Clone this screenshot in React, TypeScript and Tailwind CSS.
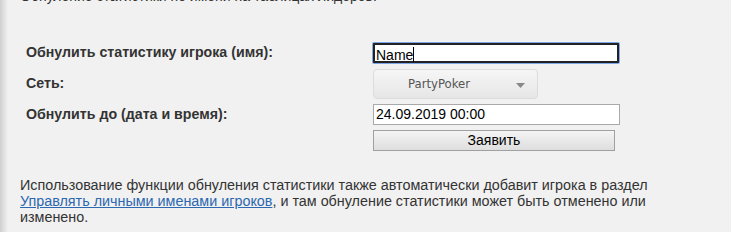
import React from "react";

export default function App() {
  return (
    <div className="flex h-[232px] w-[731px] overflow-hidden bg-[#f1f1f1] font-['Liberation_Sans',Arial,sans-serif] text-[#333]">
      <div className="w-[8px] shrink-0 bg-gradient-to-r from-[#cfcfcf] to-[#f1f1f1]" />
      <div className="flex flex-1 flex-col pl-[12px]">
        <div className="mt-[-12px] h-[16px] text-[14px] leading-[16px] text-[#333]">
          Обнуление статистики по имени на таблицах лидеров.
        </div>
        <div className="mt-[39px] flex flex-col pl-[6px]">
          <div className="flex h-[20px] items-center">
            <div className="w-[347px] text-[14.2px] font-bold">Обнулить статистику игрока (имя):</div>
            <div className="h-[20px] w-[246px] rounded-[1px] border-2 border-[#222] bg-white px-[1px] text-[14px] leading-[16px] text-black shadow-[0_0_0_1px_#7ea6e6]">
              Name<span className="inline-block h-[15px] w-px translate-y-[2px] bg-black" />
            </div>
          </div>
          <div className="mt-[6px] flex h-[30px] items-center">
            <div className="w-[347px] text-[14.2px] font-bold">Сеть:</div>
            <div className="relative flex h-[30px] w-[165px] items-center rounded-[4px] border border-[#dcdcdc] bg-gradient-to-b from-[#f6f6f6] to-[#e6e6e6] pt-[1px] font-['DejaVu_Sans',Verdana,sans-serif] text-[11.7px] text-[#555]">
              <span className="ml-[34px]">PartyPoker</span>
              <svg className="absolute left-[142px] top-[13px]" width="9" height="5" viewBox="0 0 9 5">
                <path d="M0 0 H9 L4.5 5 Z" fill="#888" />
              </svg>
            </div>
          </div>
          <div className="mt-[5px] flex h-[21px] items-center">
            <div className="w-[347px] text-[14.2px] font-bold">Обнулить до (дата и время):</div>
            <div className="h-[21px] w-[247px] border border-[#a9a9a9] bg-white pl-[2px] text-[14px] leading-[19px] text-black">
              24.09.2019 00:00
            </div>
          </div>
          <div className="mt-[5px] flex h-[21px] items-center">
            <div className="w-[347px]" />
            <div className="flex h-[21px] w-[242px] items-center justify-center border border-[#a0a0a0] bg-gradient-to-b from-[#f4f4f4] to-[#dedede] text-[14px] text-black">
              Заявить
            </div>
          </div>
        </div>
        <p className="mt-[26px] w-[680px] text-[14.35px] leading-[16px] text-[#333]">
          Использование функции обнуления статистики также автоматически добавит игрока в раздел{" "}
          <a className="text-[#2b68b0] underline">Управлять личными именами игроков</a>, и там обнуление статистики может быть отменено или изменено.
        </p>
      </div>
    </div>
  );
}
